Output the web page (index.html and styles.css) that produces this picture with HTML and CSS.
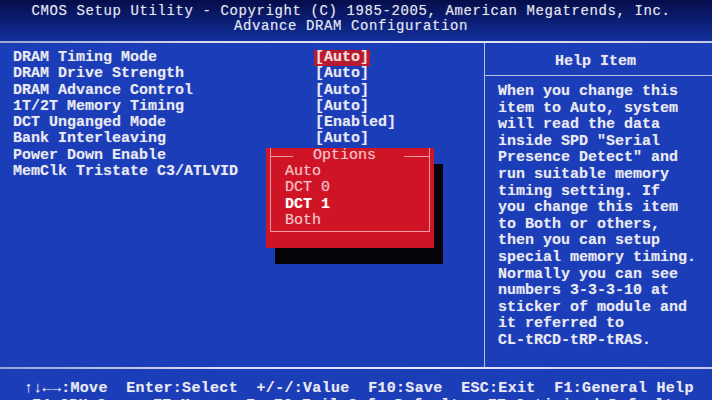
FILE: index.html
```html
<!DOCTYPE html>
<html lang="en">
<head>
<meta charset="utf-8">
<title>CMOS Setup Utility</title>
<link rel="stylesheet" href="styles.css">
</head>
<body>
<div class="screen">
  <header class="top">
    <div class="t1">CMOS Setup Utility - Copyright (C) 1985-2005, American Megatrends, Inc.</div>
    <div class="t2">Advance DRAM Configuration</div>
  </header>
  <div class="rule"></div>
  <main class="main">
    <section class="settings">
      <span class="label">DRAM Timing Mode</span><span class="val"><span class="sel">[Auto]</span></span>
      <span class="label">DRAM Drive Strength</span><span class="val">[Auto]</span>
      <span class="label">DRAM Advance Control</span><span class="val">[Auto]</span>
      <span class="label">1T/2T Memory Timing</span><span class="val">[Auto]</span>
      <span class="label">DCT Unganged Mode</span><span class="val">[Enabled]</span>
      <span class="label">Bank Interleaving</span><span class="val">[Auto]</span>
      <span class="label">Power Down Enable</span><span class="val"></span>
      <span class="label">MemClk Tristate C3/ATLVID</span><span class="val"></span>
    </section>
    <aside class="help">
      <div class="help-title">Help Item</div>
      <div class="help-text">When you change this
item to Auto, system
will read the data
inside SPD "Serial
Presence Detect" and
run suitable memory
timing setting. If
you change this item
to Both or others,
then you can setup
special memory timing.
Normally you can see
numbers 3-3-3-10 at
sticker of module and
it referred to
CL-tRCD-tRP-tRAS.</div>
    </aside>
  </main>
  <div class="rule rule-bottom"></div>
  <footer class="keys">
    <div class="keyrow">↑↓←→:Move  Enter:Select  +/-/:Value  F10:Save  ESC:Exit  F1:General Help</div>
    <div class="keyrow keyrow2">F4:CPU Spec  F7:Memory-Z  F6:Fail-Safe Defaults  F7:Optimized Defaults</div>
  </footer>
  <div class="popup">
    <div class="frame">
      <div class="opt-title"><span class="line-l"></span><span class="opt-name">Options</span><span class="line-r"></span></div>
      <div class="opt">Auto</div>
      <div class="opt">DCT 0</div>
      <div class="opt opt-cur">DCT 1</div>
      <div class="opt">Both</div>
    </div>
  </div>
</div>
</body>
</html>
```

FILE: styles.css
```css
html, body {
  margin: 0;
  padding: 0;
  background: #1a3cb6;
}
.screen {
  position: relative;
  width: 712px;
  height: 400px;
  overflow: hidden;
  background: #1b3db8;
  font-family: "Liberation Mono", "DejaVu Sans Mono", monospace;
  font-weight: bold;
  font-size: 15px;
  color: #e9e9f2;
  text-shadow: 0 0 1px rgba(255,255,255,0.35);
}
.top {
  height: 41px;
  box-sizing: border-box;
  padding: 4px 10px 0 0;
  background: linear-gradient(180deg, #060d4a 0%, #0c1f78 55%, #12309a 100%);
  text-align: center;
  line-height: 15px;
  font-size: 14px;
  letter-spacing: 0.6px;
  font-weight: normal;
  color: #e4e6f0;
}
.t1, .t2 {
  white-space: nowrap;
}
.rule {
  height: 2px;
  background: linear-gradient(90deg, #9aa6d0 0%, #d8dcee 30%, #e6e8f2 60%, #c4cae4 100%);
}
.main {
  display: flex;
  height: 324px;
}
.settings {
  width: 484px;
  box-sizing: border-box;
  padding: 7px 0 0 13px;
  display: grid;
  grid-template-columns: 302px auto;
  grid-auto-rows: 16.3px;
  align-content: start;
  line-height: 16.3px;
  white-space: pre;
}
.sel {
  display: inline-block;
  background: #b81a2e;
  color: #f6dede;
  padding: 0 1px;
  margin-left: -1px;
}
.help {
  flex: 1;
  border-left: 1px solid #b9c1e2;
  display: flex;
  flex-direction: column;
}
.help-title {
  height: 32px;
  line-height: 37px;
  text-align: center;
  border-bottom: 1px solid #b9c1e2;
  padding-right: 6px;
}
.help-text {
  padding: 8px 0 0 13px;
  line-height: 16.6px;
  white-space: pre;
}
.keys {
  padding-top: 11px;
  font-size: 15px;
  letter-spacing: 0.3px;
  line-height: 17px;
}
.keyrow {
  white-space: pre;
  padding-left: 24px;
}
.keyrow2 {
  padding-left: 32px;
}
.popup {
  position: absolute;
  left: 266px;
  top: 148px;
  width: 168px;
  height: 100px;
  box-sizing: border-box;
  padding: 8px 4px 8px 4px;
  background: #cf1426;
  box-shadow: 9px 16px 0 #050308;
  font-weight: normal;
  color: #f2c4c8;
}
.frame {
  height: 100%;
  box-sizing: border-box;
  border: 1px solid #ee9ca4;
  border-top: none;
}
.opt-title {
  display: flex;
  align-items: center;
  height: 16px;
  margin: -8px -1px 0 -1px;
  line-height: 16px;
}
.line-l {
  width: 23px;
  border-top: 1px solid #ee9ca4;
}
.opt-name {
  margin: 0 28px 0 20px;
}
.line-r {
  flex: 1;
  border-top: 1px solid #ee9ca4;
}
.opt {
  padding-left: 14px;
  line-height: 16.3px;
}
.opt-cur {
  color: #ffffff;
  font-weight: bold;
}
```
